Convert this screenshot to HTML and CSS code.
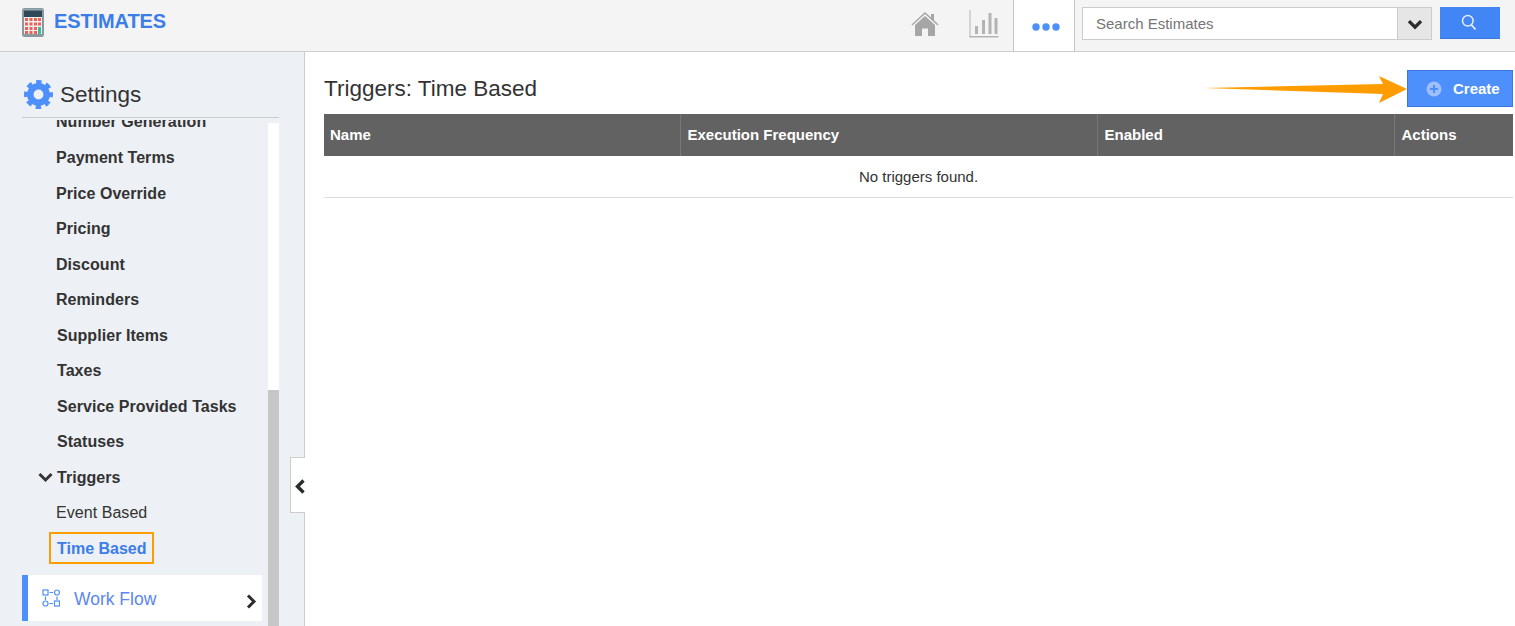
FILE: index.html
```html
<!DOCTYPE html>
<html>
<head>
    <title>Estimates</title>
    <meta charset="utf-8">
    <link rel="stylesheet" href="styles.css">
</head>
<body>
    <div class="topbar">
        <div class="brand">
            <svg class="brand-icon" width="22" height="29" viewBox="0 0 22 29">
                <rect x="0.5" y="0.5" width="21" height="28" rx="1.5" fill="#e4e8e8" stroke="#8a9a9e"/>
                <rect x="1.5" y="1.5" width="19" height="26" fill="#2f4858"/>
                <rect x="3" y="3" width="16" height="5" fill="#2f4858"/>
                <rect x="2" y="1.5" width="18" height="1" fill="#9fb0b5"/>
                <rect x="2" y="9" width="18" height="17.5" fill="#eef0ee"/>
                <g fill="#ee5f58">
                    <rect x="3" y="10" width="3" height="3"/><rect x="7.500" y="10" width="3" height="3"/><rect x="12" y="10" width="3" height="3"/><rect x="16" y="10" width="3" height="3"/>
                    <rect x="3" y="14.500" width="3" height="3"/><rect x="7.500" y="14.500" width="3" height="3"/><rect x="12" y="14.500" width="3" height="3"/><rect x="16" y="14.500" width="3" height="3"/>
                    <rect x="3" y="19" width="3" height="3"/><rect x="7.500" y="19" width="3" height="3"/><rect x="12" y="19" width="3" height="3"/>
                    <rect x="3" y="23" width="3" height="3"/><rect x="7.500" y="23" width="3" height="3"/><rect x="12" y="23" width="3" height="3"/>
                </g>
                <rect x="16" y="19" width="3" height="7" fill="#3fb79a"/>
            </svg>
            <span class="brand-name">ESTIMATES</span>
        </div>
        <div class="top-right">
            <a class="top-tab home-tab">
                <svg width="28" height="26" viewBox="0 0 28 26">
                    <path d="M14 1 L20 6.500 V3 H23 V9.200 L27.500 13.500 L26.600 14.500 L14 3 L1.400 14.500 L0.500 13.500 Z" fill="#a6a6a6"/>
                    <path d="M14 5 L24 14 V25 H17 V17.500 H11 V25 H4 V14 Z" fill="#a6a6a6"/>
                </svg>
            </a>
            <a class="top-tab chart-tab">
                <svg width="30" height="28" viewBox="0 0 30 28">
                    <g fill="#b4b4b4">
                        <rect x="0.500" y="0" width="1" height="27"/>
                        <rect x="0.500" y="26" width="29" height="1.500"/>
                        <rect x="6" y="16" width="3" height="8"/>
                        <rect x="13" y="10" width="3" height="14"/>
                        <rect x="19.500" y="3" width="3" height="21"/>
                        <rect x="25.500" y="8" width="3" height="16"/>
                    </g>
                </svg>
            </a>
            <a class="top-tab more-tab">
                <svg width="28" height="8" viewBox="0 0 28 8">
                    <circle cx="4" cy="4" r="3.700" fill="#4d8ffb"/>
                    <circle cx="14" cy="4" r="3.700" fill="#4d8ffb"/>
                    <circle cx="24" cy="4" r="3.700" fill="#4d8ffb"/>
                </svg>
            </a>
            <div class="search">
                <div class="search-input">Search Estimates</div>
                <div class="search-drop">
                    <svg width="16" height="11" viewBox="0 0 14 10"><path d="M1.500 2 L7 7.500 L12.500 2" fill="none" stroke="#2b2b2b" stroke-width="3"/></svg>
                </div>
            </div>
            <button class="search-btn">
                <svg width="16" height="17" viewBox="0 0 16 17">
                    <circle cx="6.800" cy="6.800" r="5.300" fill="none" stroke="#e6efff" stroke-width="1.500"/>
                    <path d="M10.500 11 L14.500 15.500" stroke="#e6efff" stroke-width="1.800"/>
                </svg>
            </button>
        </div>
    </div>
    <div class="main">
        <div class="sidebar">
            <div class="settings-head">
                <svg class="gear" width="29" height="29" viewBox="0 0 24 24">
                    <circle cx="12" cy="12" r="6.800" fill="none" stroke="#4d8ffb" stroke-width="5.400"/>
                    <circle cx="12" cy="12" r="10.300" fill="none" stroke="#4d8ffb" stroke-width="3.400" stroke-dasharray="4.400 3.690" stroke-dashoffset="2.200"/>
                </svg>
                <span>Settings</span>
            </div>
            <div class="side-body">
                <div class="side-scroll">
                    <ul class="side-list">
                        <li class="cut">Number Generation</li>
                        <li>Payment Terms</li>
                        <li>Price Override</li>
                        <li>Pricing</li>
                        <li>Discount</li>
                        <li>Reminders</li>
                        <li class="shift">Supplier Items</li>
                        <li class="shift">Taxes</li>
                        <li class="shift">Service Provided Tasks</li>
                        <li class="shift">Statuses</li>
                        <li class="shift has-caret">
                            <svg class="caret" width="15" height="11" viewBox="0 0 15 11"><path d="M1.500 2 L7.500 8 L13.500 2" fill="none" stroke="#333" stroke-width="3"/></svg>
                            Triggers
                        </li>
                        <li class="plain">Event Based</li>
                        <li class="current"><span>Time Based</span></li>
                    </ul>
                    <div class="workflow">
                        <svg width="18" height="18" viewBox="0 0 18 18">
                            <g fill="none" stroke="#4d8ffb" stroke-width="1.200">
                                <rect x="1" y="1" width="5" height="5"/>
                                <circle cx="15" cy="3.500" r="2.500"/>
                                <circle cx="3.500" cy="14.500" r="2.500"/>
                                <rect x="12.500" y="12" width="5" height="5"/>
                                <path d="M7.500 3.500 H11 M3.500 7.500 V11 M15 7.500 V11 M7.500 14.500 H11"/>
                            </g>
                        </svg>
                        <span class="workflow-name">Work Flow</span>
                        <svg class="workflow-arrow" width="11" height="15" viewBox="0 0 11 15"><path d="M2 1.500 L8 7.500 L2 13.500" fill="none" stroke="#2b2b2b" stroke-width="3"/></svg>
                    </div>
                </div>
                <div class="scrollbar"><div class="scrollbar-thumb"></div></div>
            </div>
            <div class="collapse">
                <svg width="10" height="15" viewBox="0 0 10 15"><path d="M8.500 1.500 L2.500 7.500 L8.500 13.500" fill="none" stroke="#2b2b2b" stroke-width="3.400"/></svg>
            </div>
        </div>
        <div class="content">
            <div class="content-head">
                <h1>Triggers: Time Based</h1>
                <svg class="arrow" width="204" height="30" viewBox="0 0 204 30">
                    <path d="M1 14 L180 10 L176 2 L204 15 L176 29 L180 20 Z" fill="#ff9d00"/>
                </svg>
                <button class="create-btn">
                    <svg width="16" height="16" viewBox="0 0 16 16">
                        <circle cx="8" cy="8" r="7.500" fill="#9dbffb"/>
                        <path d="M8 4 V12 M4 8 H12" stroke="#4d8ffb" stroke-width="2"/>
                    </svg>
                    Create
                </button>
            </div>
            <table class="triggers">
                <thead>
                    <tr>
                        <th class="col-name">Name</th>
                        <th class="col-freq">Execution Frequency</th>
                        <th class="col-enabled">Enabled</th>
                        <th>Actions</th>
                    </tr>
                </thead>
                <tbody>
                    <tr>
                        <td colspan="4">No triggers found.</td>
                    </tr>
                </tbody>
            </table>
        </div>
    </div>
</body>
</html>
```
FILE: styles.css
```css
*{
    padding: 0;
    margin: 0;
    box-sizing: border-box;
    font-family: "Liberation Sans", Arial, sans-serif;
}
html, body{
    height: 626px;
    overflow: hidden;
}
body{
    background: #ffffff;
    color: #333333;
}
.topbar{
    height: 52px;
    background: #f4f4f4;
    border-bottom: 1px solid #cccccc;
    display: flex;
    justify-content: space-between;
}
.brand{
    display: flex;
    align-items: flex-start;
    padding: 8px 0 0 22px;
}
.brand-name{
    margin-left: 10px;
    margin-top: 2px;
    font-size: 20px;
    font-weight: 700;
    letter-spacing: -0.1px;
    color: #3b7de9;
}
.top-right{
    display: flex;
    align-items: flex-start;
}
.top-tab{
    width: 59px;
    height: 50px;
    display: flex;
    justify-content: center;
    align-items: center;
    padding-bottom: 2px;
}
.home-tab{
    padding-left: 2px;
}
.chart-tab{
    padding-left: 3px;
}
.more-tab{
    width: 62px;
    margin-left: 1px;
    background: #ffffff;
    border-left: 1px solid #c4c4c4;
    border-right: 1px solid #c4c4c4;
    padding: 3px 0 0 3px;
    height: 51px;
}
.search{
    width: 350px;
    height: 33px;
    margin: 7px 0 0 7px;
    display: flex;
    border: 1px solid #cccccc;
    background: #ffffff;
}
.search-input{
    flex: 1;
    font-size: 15px;
    line-height: 31px;
    padding-left: 13px;
    color: #757575;
}
.search-drop{
    width: 34px;
    background: #e6e6e6;
    border-left: 1px solid #cccccc;
    display: flex;
    justify-content: center;
    align-items: center;
    padding-top: 2px;
}
.search-btn{
    width: 60px;
    height: 32px;
    margin: 7px 15px 0 8px;
    background: #4285f4;
    border: 0;
    border-bottom: 1px solid #3a78de;
    display: flex;
    justify-content: center;
    align-items: center;
    padding: 0 2px 1px 0;
}
.main{
    display: flex;
    height: 574px;
}
.sidebar{
    width: 305px;
    background: #edf0f5;
    border-right: 1px solid #cccccc;
    padding: 26px 25px 0 22px;
    position: relative;
    flex-shrink: 0;
}
.settings-head{
    height: 40px;
    border-bottom: 1px solid #cccccc;
    display: flex;
    align-items: center;
    padding-bottom: 7px;
    font-size: 22.500px;
    color: #333333;
}
.gear{
    margin-left: 2px;
}
.settings-head span{
    margin: 2px 0 0 7px;
}
.side-body{
    display: flex;
    height: 510px;
    overflow: hidden;
}
.side-scroll{
    width: 245px;
    margin-top: 2px;
    flex-shrink: 0;
    overflow: hidden;
}
.side-list{
    list-style: none;
    margin-top: -16px;
}
.side-list li{
    height: 35.500px;
    line-height: 35.500px;
    padding-left: 34px;
    font-size: 16px;
    font-weight: 700;
    letter-spacing: 0.05px;
    white-space: nowrap;
}
.side-list .shift{
    padding-left: 35px;
}
.side-list .cut{
    height: 36px;
    line-height: 36px;
}
.side-list .has-caret{
    position: relative;
}
.caret{
    position: absolute;
    left: 16px;
    top: 12px;
}
.side-list .plain{
    font-weight: 400;
}
.side-list .current{
    color: #3b7de9;
    padding-left: 27px;
    letter-spacing: 0;
}
.current span{
    display: inline-block;
    height: 32px;
    line-height: 30px;
    padding: 0 5px 0 6px;
    border: 2px solid #ff9d00;
    vertical-align: top;
    margin-top: 1px;
}
.workflow{
    width: 240px;
    height: 46px;
    margin-top: 9px;
    background: #ffffff;
    border-left: 6px solid #4d8ffb;
    display: flex;
    align-items: center;
    padding-left: 14px;
    position: relative;
}
.workflow-name{
    margin: 2px 0 0 14px;
    font-size: 17.500px;
    color: #5c86f0;
}
.workflow-arrow{
    position: absolute;
    right: 5px;
    top: 19px;
}
.scrollbar{
    width: 11px;
    margin: 5px 0 0 1px;
    background: #ffffff;
    flex-shrink: 0;
}
.scrollbar-thumb{
    margin-top: 267px;
    height: 240px;
    background: #c6c6c6;
}
.collapse{
    position: absolute;
    left: 290px;
    top: 405px;
    width: 15px;
    height: 56px;
    background: #ffffff;
    border: 1px solid #cccccc;
    border-right: 0;
    display: flex;
    align-items: center;
    justify-content: center;
    padding: 2px 0 0 3px;
}
.content{
    flex: 1;
    padding: 18px 2px 0 19px;
}
.content-head{
    display: flex;
    align-items: center;
    height: 44px;
}
.content-head h1{
    flex: 1;
    font-size: 22.500px;
    font-weight: 400;
    color: #333333;
    padding-bottom: 7px;
}
.arrow{
    position: relative;
    top: -3px;
}
.create-btn{
    width: 106px;
    height: 37px;
    background: #4d8ffb;
    border: 1px solid #3a78de;
    color: #ffffff;
    font-size: 15px;
    font-weight: 700;
    display: flex;
    align-items: center;
    padding-left: 18px;
    gap: 11px;
    margin-bottom: 7px;
}
.triggers{
    width: 100%;
    border-collapse: collapse;
    table-layout: fixed;
}
.triggers th{
    height: 42px;
    background: #626262;
    color: #ffffff;
    font-size: 15px;
    font-weight: 700;
    text-align: left;
    padding: 0 0 2px 7px;
    border-left: 1px solid #787878;
}
.triggers th:first-child{
    border-left: 0;
    padding-left: 6px;
}
.col-name{
    width: 356px;
}
.col-freq{
    width: 417px;
}
.col-enabled{
    width: 297px;
}
.triggers td{
    height: 41px;
    text-align: center;
    font-size: 15px;
    border-bottom: 1px solid #dddddd;
}
```
